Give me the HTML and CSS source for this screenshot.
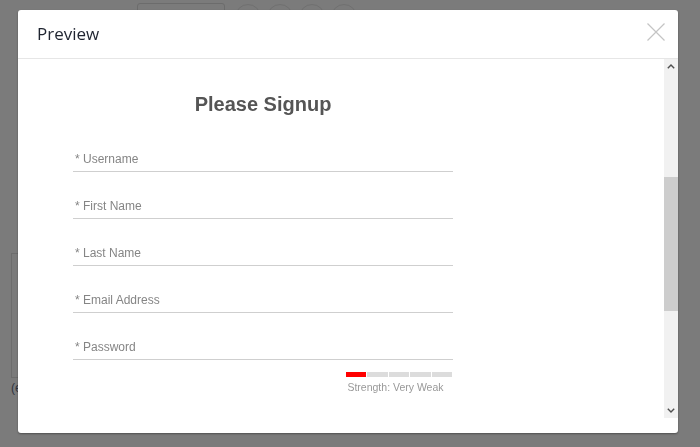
FILE: index.html
```html
<!DOCTYPE html>
<html lang="en">
<head>
<meta charset="utf-8">
<title>Preview</title>
<link rel="stylesheet" href="styles.css">
</head>
<body>
<div class="page">
  <div class="toolbar">
    <div class="tool-box"></div>
    <div class="tool-circle"></div>
    <div class="tool-circle"></div>
    <div class="tool-circle"></div>
    <div class="tool-circle"></div>
  </div>
  <div class="side-box"></div>
  <div class="side-text">(e</div>
</div>

<div class="modal">
  <div class="modal-header">
    <div class="modal-title">Preview</div>
    <svg class="close" width="18" height="18" viewBox="0 0 18 18">
      <path d="M0.5 0.5 L17.5 17.5 M17.5 0.5 L0.5 17.5" stroke="#c4c4c4" stroke-width="1.2" fill="none"/>
    </svg>
  </div>
  <div class="modal-body">
    <div class="scroll-area">
      <div class="content">
        <h2 class="form-title">Please Signup</h2>
        <form class="form">
          <input class="field" type="text" placeholder="* Username">
          <input class="field" type="text" placeholder="* First Name">
          <input class="field" type="text" placeholder="* Last Name">
          <input class="field" type="text" placeholder="* Email Address">
          <input class="field" type="password" placeholder="* Password">
          <div class="strength">
            <div class="strength-bar">
              <span class="seg seg-on"></span>
              <span class="seg"></span>
              <span class="seg"></span>
              <span class="seg"></span>
              <span class="seg"></span>
            </div>
            <div class="strength-text">Strength: Very Weak</div>
          </div>
        </form>
      </div>
      <div class="scrollbar">
        <div class="sb-btn">
          <svg width="8" height="5" viewBox="0 0 8 5"><path d="M0.8 4.3 L4 1.1 L7.2 4.3" stroke="#505050" stroke-width="1.4" fill="none"/></svg>
        </div>
        <div class="sb-track">
          <div class="sb-thumb"></div>
        </div>
        <div class="sb-btn">
          <svg width="8" height="5" viewBox="0 0 8 5"><path d="M0.8 0.7 L4 3.9 L7.2 0.7" stroke="#505050" stroke-width="1.4" fill="none"/></svg>
        </div>
      </div>
    </div>
  </div>
</div>
</body>
</html>
```

FILE: styles.css
```css
html, body {
  margin: 0;
  padding: 0;
}

body {
  width: 700px;
  height: 447px;
  background: #7b7b7b;
  overflow: hidden;
  font-family: "Liberation Sans", Arial, sans-serif;
}

/* page behind the overlay */
.page {
  padding-top: 3px;
}

.toolbar {
  display: flex;
  gap: 6px;
  margin-left: 137px;
}

.tool-box {
  width: 86px;
  height: 30px;
  border: 1px solid #6c6c6c;
  border-radius: 3px;
  margin-right: 4px;
}

.tool-circle {
  width: 24px;
  height: 24px;
  border: 1px solid #707070;
  border-radius: 50%;
  margin-top: 1px;
}

.side-box {
  margin: 218px 0 0 11px;
  width: 200px;
  height: 123px;
  border: 1px solid #6d6d6d;
}

.side-text {
  margin: 3px 0 0 11px;
  font-size: 12px;
  line-height: 14px;
  color: #2f3340;
}

/* modal */
.modal {
  position: fixed;
  left: 18px;
  top: 10px;
  width: 660px;
  height: 423px;
  background: #fff;
  border-radius: 3px;
  box-shadow: 0 1px 2px rgba(0, 0, 0, 0.35);
  display: flex;
  flex-direction: column;
  overflow: hidden;
}

.modal-header {
  height: 48px;
  border-bottom: 1px solid #e6e6e6;
  display: flex;
  align-items: center;
  justify-content: space-between;
  padding: 0 13px 0 19px;
  flex-shrink: 0;
}

.modal-title {
  font-family: "Open Sans", "Noto Sans", sans-serif;
  font-size: 17px;
  color: #1f2430;
  line-height: 22px;
}

.close {
  display: block;
  margin-top: -4px;
}

.modal-body {
  flex: 1;
  padding-bottom: 15px;
  display: flex;
  flex-direction: column;
}

.scroll-area {
  flex: 1;
  display: flex;
}

.content {
  flex: 1;
  padding-left: 55px;
}

.form-title {
  width: 380px;
  margin: 33px 0 0 0;
  text-align: center;
  font-size: 20px;
  line-height: 24px;
  font-weight: bold;
  color: #555;
}

.form {
  width: 380px;
  margin-top: 21px;
  display: flex;
  flex-direction: column;
  gap: 12px;
}

.field {
  display: block;
  box-sizing: border-box;
  width: 380px;
  height: 35px;
  margin: 0;
  padding: 10px 2px 0 2px;
  border: none;
  border-bottom: 1px solid #cfcfcf;
  outline: none;
  font-family: "Liberation Sans", Arial, sans-serif;
  font-size: 12px;
  line-height: 24px;
  color: #555;
  background: transparent;
}

.field::placeholder {
  color: #858585;
  opacity: 1;
}

.strength {
  width: 106px;
  margin: 0 1px 0 auto;
}

.strength-bar {
  display: flex;
  gap: 1px;
  height: 5px;
}

.seg {
  flex: 1;
  background: #dcdcdc;
}

.seg-on {
  background: #ff0000;
}

.strength-text {
  margin-top: 4px;
  padding-right: 7px;
  text-align: center;
  font-size: 10.5px;
  line-height: 12px;
  color: #999;
  white-space: nowrap;
}

/* fake scrollbar */
.scrollbar {
  width: 14px;
  display: flex;
  flex-direction: column;
  background: #f1f1f1;
}

.sb-btn {
  height: 15px;
  display: flex;
  align-items: center;
  justify-content: center;
}

.sb-track {
  flex: 1;
  padding-top: 103px;
}

.sb-thumb {
  height: 134px;
  background: #cdcdcd;
}
```
